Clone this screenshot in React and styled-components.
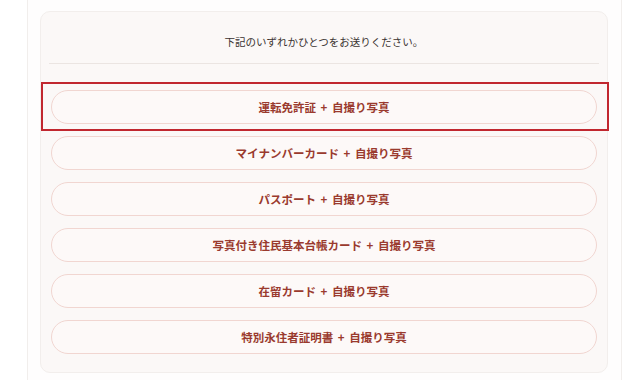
import React from 'react';
import styled, { createGlobalStyle } from 'styled-components';

const GlobalStyle = createGlobalStyle`
  html, body {
    margin: 0;
    padding: 0;
    background: #ffffff;
    font-family: "Noto Sans CJK JP", "Noto Sans", sans-serif;
  }
`;

const Page = styled.div`
  width: 640px;
  height: 380px;
  overflow: hidden;
  display: flex;
  padding-left: 27px;
  box-sizing: border-box;
`;

const Column = styled.div`
  width: 595px;
  height: 380px;
  border-left: 1px solid #f1eeec;
  border-right: 1px solid #f1eeec;
  background: #fefdfd;
  padding: 11px 13px 0 12px;
  box-sizing: border-box;
`;

const Card = styled.div`
  background: #fbf8f7;
  border: 1px solid #f2eeec;
  border-radius: 10px;
  padding: 0 8px 20px 8px;
  box-sizing: border-box;
  height: 362px;
`;

const Lead = styled.div`
  height: 52px;
  border-bottom: 1px solid #ebe5e2;
  display: flex;
  align-items: center;
  justify-content: center;
  font-size: 10.5px;
  color: #3a3330;
  padding-top: 8px;
  box-sizing: border-box;
`;

const List = styled.div`
  display: flex;
  flex-direction: column;
  gap: 12px;
  padding-top: 26px;
`;

const Item = styled.div`
  position: relative;
  margin: 0 2px;
`;

const Highlight = styled.div`
  position: absolute;
  left: -10px;
  right: -12px;
  top: -8px;
  bottom: -7px;
  border: 2px solid #c1272f;
  pointer-events: none;
`;

const Option = styled.button`
  display: flex;
  align-items: center;
  justify-content: center;
  width: 100%;
  height: 34px;
  border: 1.5px solid #f1d6d1;
  border-radius: 17px;
  background: #fdf9f8;
  color: #9a3a2e;
  font-family: inherit;
  font-weight: 700;
  font-size: 11.5px;
  word-spacing: 2px;
  cursor: pointer;
  padding: 0;
`;

const options = [
  '運転免許証 + 自撮り写真',
  'マイナンバーカード + 自撮り写真',
  'パスポート + 自撮り写真',
  '写真付き住民基本台帳カード + 自撮り写真',
  '在留カード + 自撮り写真',
  '特別永住者証明書 + 自撮り写真',
];

export default function App() {
  return (
    <>
      <GlobalStyle />
      <Page>
        <Column>
          <Card>
            <Lead>下記のいずれかひとつをお送りください。</Lead>
            <List>
              {options.map((o, i) => (
                <Item key={o}>
                  {i === 0 && <Highlight />}
                  <Option>{o}</Option>
                </Item>
              ))}
            </List>
          </Card>
        </Column>
      </Page>
    </>
  );
}
